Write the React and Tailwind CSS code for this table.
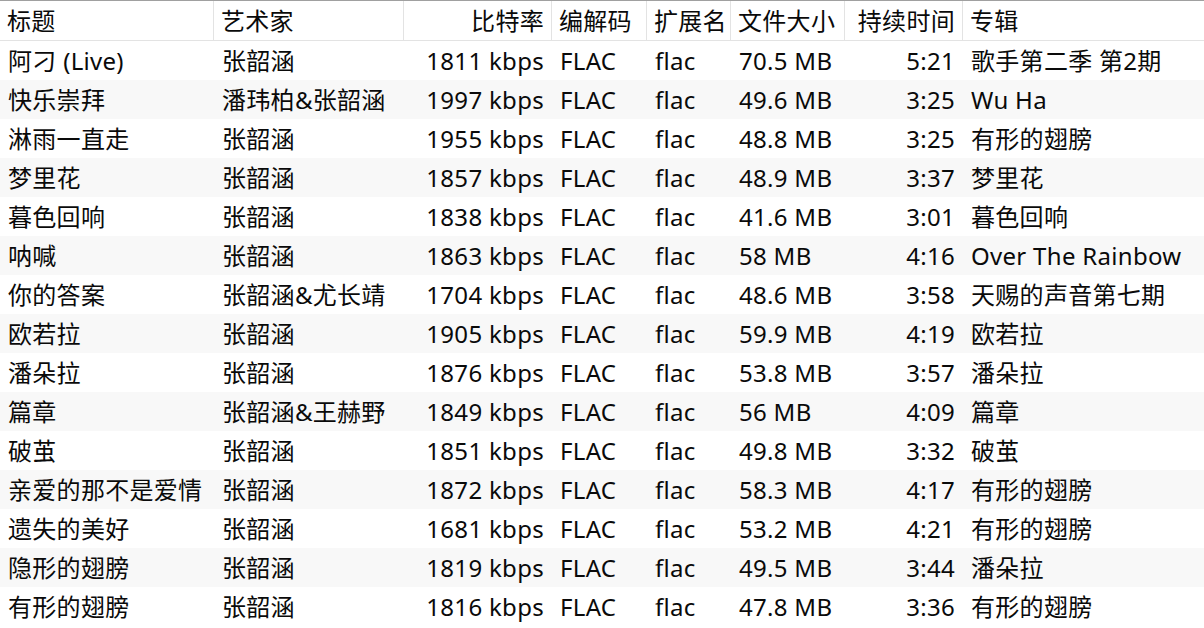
import React from 'react';

const rows = [
  ['阿刁 (Live)', '张韶涵', '1811 kbps', 'FLAC', 'flac', '70.5 MB', '5:21', '歌手第二季 第2期'],
  ['快乐崇拜', '潘玮柏&张韶涵', '1997 kbps', 'FLAC', 'flac', '49.6 MB', '3:25', 'Wu Ha'],
  ['淋雨一直走', '张韶涵', '1955 kbps', 'FLAC', 'flac', '48.8 MB', '3:25', '有形的翅膀'],
  ['梦里花', '张韶涵', '1857 kbps', 'FLAC', 'flac', '48.9 MB', '3:37', '梦里花'],
  ['暮色回响', '张韶涵', '1838 kbps', 'FLAC', 'flac', '41.6 MB', '3:01', '暮色回响'],
  ['呐喊', '张韶涵', '1863 kbps', 'FLAC', 'flac', '58 MB', '4:16', 'Over The Rainbow'],
  ['你的答案', '张韶涵&尤长靖', '1704 kbps', 'FLAC', 'flac', '48.6 MB', '3:58', '天赐的声音第七期'],
  ['欧若拉', '张韶涵', '1905 kbps', 'FLAC', 'flac', '59.9 MB', '4:19', '欧若拉'],
  ['潘朵拉', '张韶涵', '1876 kbps', 'FLAC', 'flac', '53.8 MB', '3:57', '潘朵拉'],
  ['篇章', '张韶涵&王赫野', '1849 kbps', 'FLAC', 'flac', '56 MB', '4:09', '篇章'],
  ['破茧', '张韶涵', '1851 kbps', 'FLAC', 'flac', '49.8 MB', '3:32', '破茧'],
  ['亲爱的那不是爱情', '张韶涵', '1872 kbps', 'FLAC', 'flac', '58.3 MB', '4:17', '有形的翅膀'],
  ['遗失的美好', '张韶涵', '1681 kbps', 'FLAC', 'flac', '53.2 MB', '4:21', '有形的翅膀'],
  ['隐形的翅膀', '张韶涵', '1819 kbps', 'FLAC', 'flac', '49.5 MB', '3:44', '潘朵拉'],
  ['有形的翅膀', '张韶涵', '1816 kbps', 'FLAC', 'flac', '47.8 MB', '3:36', '有形的翅膀'],
];

const headers = ['标题', '艺术家', '比特率', '编解码', '扩展名', '文件大小', '持续时间', '专辑'];
// bitrate and duration are right aligned
const align = ['text-left', 'text-left', 'text-right', 'text-left', 'text-left', 'text-left', 'text-right', 'text-left'];

const cols = 'grid grid-cols-[214px_190px_148px_95px_84px_114px_118px_1fr]';

export default function App() {
  return (
    <div
      className="w-[1204px] h-[628px] overflow-hidden bg-white text-[24px] tracking-[0.3px] text-[#0a0a0a] border-t border-[#a0a0a0]"
      style={{ fontFamily: '"Noto Sans", "Noto Sans CJK SC", sans-serif' }}
    >
      <div className={`${cols} h-[40px] border-b border-[#e3e3e3]`}>
        {headers.map((h, i) => (
          <div
            key={h}
            className={`${align[i]} px-[7px] leading-[40px] whitespace-nowrap overflow-hidden ${i < 7 ? 'border-r border-[#e3e3e3]' : ''}`}
          >
            {h}
          </div>
        ))}
      </div>
      {rows.map((r, ri) => (
        <div key={ri} className={`${cols} h-[39px] ${ri % 2 === 1 ? 'bg-[#f8f8f8]' : 'bg-white'}`}>
          {r.map((c, i) => (
            <div key={i} className={`${align[i]} px-[8px] leading-[40px] whitespace-nowrap overflow-hidden`}>
              {c}
            </div>
          ))}
        </div>
      ))}
    </div>
  );
}
